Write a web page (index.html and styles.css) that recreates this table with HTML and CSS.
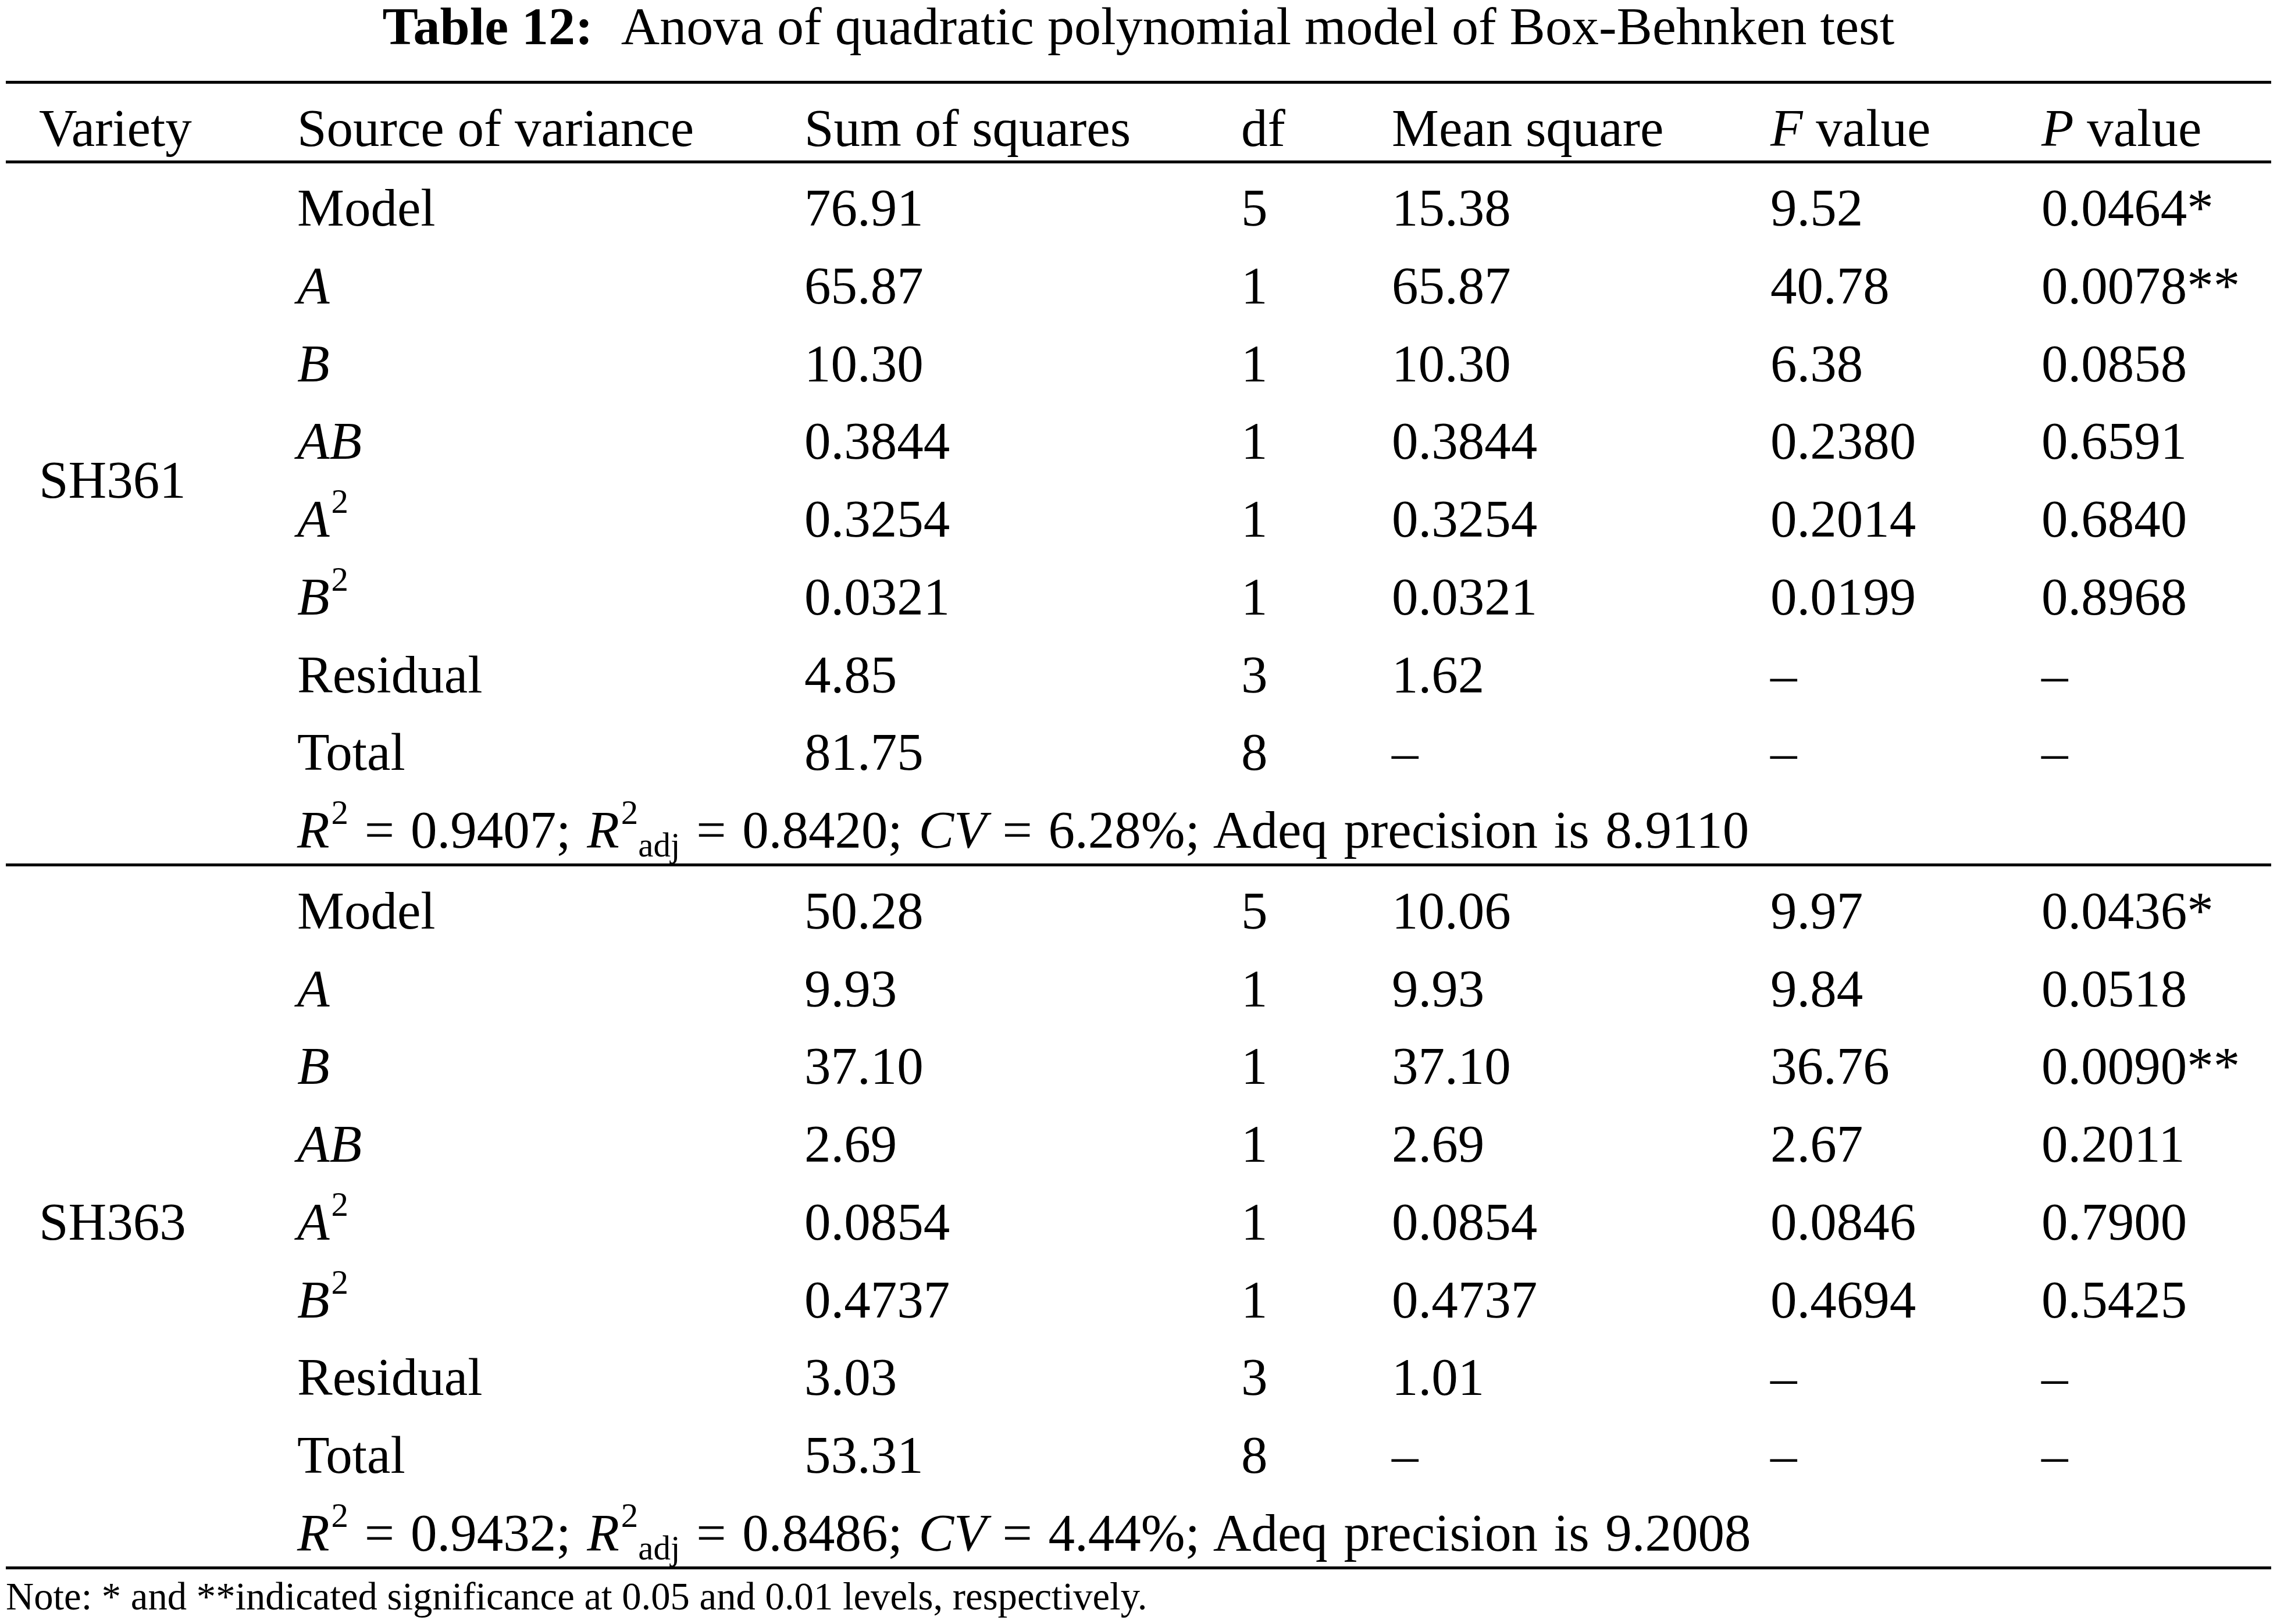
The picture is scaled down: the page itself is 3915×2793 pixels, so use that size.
FILE: index.html
```html
<!DOCTYPE html>
<html lang="en">
<head>
<meta charset="utf-8">
<title>Table 12</title>
<link rel="stylesheet" href="styles.css">
</head>
<body>
<div class="page">
  <h1 class="caption"><span class="label">Table 12:</span>Anova of quadratic polynomial model of Box-Behnken test</h1>
  <table class="anova">
    <colgroup>
      <col class="c-var">
      <col class="c-src">
      <col class="c-ss">
      <col class="c-df">
      <col class="c-ms">
      <col class="c-f">
      <col class="c-p">
    </colgroup>
    <thead>
      <tr>
        <th class="first">Variety</th>
        <th>Source of variance</th>
        <th>Sum of squares</th>
        <th>df</th>
        <th>Mean square</th>
        <th><i>F</i> value</th>
        <th><i>P</i> value</th>
      </tr>
    </thead>
    <tbody>
      <tr>
        <td class="first variety" rowspan="8">SH361</td>
        <td>Model</td><td>76.91</td><td>5</td><td>15.38</td><td>9.52</td><td>0.0464*</td>
      </tr>
      <tr><td><i>A</i></td><td>65.87</td><td>1</td><td>65.87</td><td>40.78</td><td>0.0078**</td></tr>
      <tr><td><i>B</i></td><td>10.30</td><td>1</td><td>10.30</td><td>6.38</td><td>0.0858</td></tr>
      <tr><td><i>AB</i></td><td>0.3844</td><td>1</td><td>0.3844</td><td>0.2380</td><td>0.6591</td></tr>
      <tr><td><i>A</i><sup>2</sup></td><td>0.3254</td><td>1</td><td>0.3254</td><td>0.2014</td><td>0.6840</td></tr>
      <tr><td><i>B</i><sup>2</sup></td><td>0.0321</td><td>1</td><td>0.0321</td><td>0.0199</td><td>0.8968</td></tr>
      <tr><td>Residual</td><td>4.85</td><td>3</td><td>1.62</td><td>–</td><td>–</td></tr>
      <tr><td>Total</td><td>81.75</td><td>8</td><td>–</td><td>–</td><td>–</td></tr>
      <tr class="group-end">
        <td class="first"></td>
        <td class="summary" colspan="6"><i>R</i><sup>2</sup> = 0.9407; <i>R</i><sup>2</sup><sub>adj</sub> = 0.8420; <i>CV</i> = 6.28%; Adeq precision is 8.9110</td>
      </tr>
      <tr>
        <td class="first variety" rowspan="9">SH363</td>
        <td>Model</td><td>50.28</td><td>5</td><td>10.06</td><td>9.97</td><td>0.0436*</td>
      </tr>
      <tr><td><i>A</i></td><td>9.93</td><td>1</td><td>9.93</td><td>9.84</td><td>0.0518</td></tr>
      <tr><td><i>B</i></td><td>37.10</td><td>1</td><td>37.10</td><td>36.76</td><td>0.0090**</td></tr>
      <tr><td><i>AB</i></td><td>2.69</td><td>1</td><td>2.69</td><td>2.67</td><td>0.2011</td></tr>
      <tr><td><i>A</i><sup>2</sup></td><td>0.0854</td><td>1</td><td>0.0854</td><td>0.0846</td><td>0.7900</td></tr>
      <tr><td><i>B</i><sup>2</sup></td><td>0.4737</td><td>1</td><td>0.4737</td><td>0.4694</td><td>0.5425</td></tr>
      <tr><td>Residual</td><td>3.03</td><td>3</td><td>1.01</td><td>–</td><td>–</td></tr>
      <tr><td>Total</td><td>53.31</td><td>8</td><td>–</td><td>–</td><td>–</td></tr>
      <tr>
        <td class="summary" colspan="6"><i>R</i><sup>2</sup> = 0.9432; <i>R</i><sup>2</sup><sub>adj</sub> = 0.8486; <i>CV</i> = 4.44%; Adeq precision is 9.2008</td>
      </tr>
    </tbody>
  </table>
  <p class="note">Note: * and **indicated significance at 0.05 and 0.01 levels, respectively.</p>
</div>
</body>
</html>
```

FILE: styles.css
```css
html, body {
  margin: 0;
  padding: 0;
  background: #ffffff;
}

body {
  color: #000000;
  font-family: "Liberation Serif", "Times New Roman", serif;
}

.page {
  padding: 0 10px;
}

.caption {
  margin: 0 0 50px 0;
  padding-top: 1px;
  font-size: 92px;
  font-weight: normal;
  line-height: 88px;
  text-align: center;
  white-space: nowrap;
}

.caption .label {
  font-weight: bold;
  margin-right: 48px;
}

.anova {
  width: 3895px;
  table-layout: fixed;
  border-collapse: separate;
  border-spacing: 0;
  border-top: 5px solid #000000;
  border-bottom: 5px solid #000000;
  font-size: 91px;
}

.c-var { width: 501px; }
.c-src { width: 872px; }
.c-ss  { width: 751px; }
.c-df  { width: 259px; }
.c-ms  { width: 651px; }
.c-f   { width: 466px; }
.c-p   { width: 395px; }

.anova th,
.anova td {
  padding: 27px 0 6.78px 0;
  line-height: 100px;
  text-align: left;
  font-weight: normal;
  white-space: nowrap;
  vertical-align: top;
}

.anova th {
  padding-bottom: 5px;
  border-bottom: 5px solid #000000;
}

.anova .first {
  padding-left: 57px;
}

.anova .variety {
  vertical-align: middle;
}

.anova .group-end td {
  border-bottom: 5px solid #000000;
}

.anova .summary {
  word-spacing: 5px;
}

.anova i {
  font-style: italic;
}

.anova sup,
.anova sub {
  font-size: 59px;
  line-height: 0;
  word-spacing: 0;
}

.anova sup {
  vertical-align: 41px;
  margin-left: 3px;
}

.anova sub {
  vertical-align: -15px;
}

.note {
  margin: 10px 0 0 0;
  font-size: 66.7px;
  line-height: 74px;
  white-space: nowrap;
}
```
